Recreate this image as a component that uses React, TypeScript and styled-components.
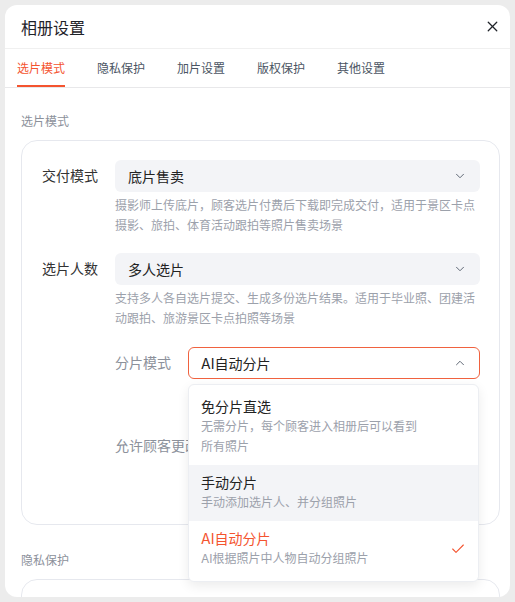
import styled, { createGlobalStyle } from "styled-components";
import { ChevronDown, ChevronUp, X, Check } from "lucide-react";

const ORANGE = "#f4542f";

const GlobalStyle = createGlobalStyle`
  html, body {
    margin: 0;
    padding: 0;
    background: #ececec;
  }
  body {
    font-family: "Inter", "Noto Sans CJK SC", sans-serif;
    color: #333;
  }
  * { box-sizing: border-box; }
`;

const tabs = ["选片模式", "隐私保护", "加片设置", "版权保护", "其他设置"];

const options = [
  {
    title: "免分片直选",
    desc: "无需分片，每个顾客进入相册后可以看到所有照片",
  },
  { title: "手动分片", desc: "手动添加选片人、并分组照片", hover: true },
  { title: "AI自动分片", desc: "AI根据照片中人物自动分组照片", active: true },
];

const App = () => {
  return (
    <Frame>
      <GlobalStyle />
      <Panel>
        <Header>
          <h1>相册设置</h1>
          <X size={17} strokeWidth={1.8} color="#1f2329" />
        </Header>
        <TabBar>
          {tabs.map((t, i) => (
            <Tab key={t} $active={i === 0}>
              {t}
            </Tab>
          ))}
        </TabBar>
        <Content>
          <Section>
            <SectionTitle>选片模式</SectionTitle>
            <Card>
              <Field>
                <Label>交付模式</Label>
                <div>
                  <Select>
                    <span>底片售卖</span>
                    <ChevronDown size={14} strokeWidth={1.5} color="#4b5563" />
                  </Select>
                  <Hint>
                    摄影师上传底片，顾客选片付费后下载即完成交付，适用于景区卡点摄影、旅拍、体育活动跟拍等照片售卖场景
                  </Hint>
                </div>
              </Field>
              <Field>
                <Label>选片人数</Label>
                <div>
                  <Select>
                    <span>多人选片</span>
                    <ChevronDown size={14} strokeWidth={1.5} color="#4b5563" />
                  </Select>
                  <Hint>
                    支持多人各自选片提交、生成多份选片结果。适用于毕业照、团建活动跟拍、旅游景区卡点拍照等场景
                  </Hint>
                </div>
              </Field>
              <SubField>
                <Label $muted>分片模式</Label>
                <SelectWrap>
                  <Select $open>
                    <span>AI自动分片</span>
                    <ChevronUp size={14} strokeWidth={1.5} color="#4b5563" />
                  </Select>
                  <Menu>
                    {options.map((o) => (
                      <Option key={o.title} $hover={o.hover}>
                        <div>
                          <OptionTitle $active={o.active}>{o.title}</OptionTitle>
                          <OptionDesc>{o.desc}</OptionDesc>
                        </div>
                        {o.active && (
                          <Check size={16} strokeWidth={1.6} color={ORANGE} />
                        )}
                      </Option>
                    ))}
                  </Menu>
                </SelectWrap>
              </SubField>
              <SwitchRow>
                <ClippedLabel>允许顾客更改分组</ClippedLabel>
              </SwitchRow>
            </Card>
          </Section>
          <Section>
            <SectionTitle>隐私保护</SectionTitle>
            <Card $short />
          </Section>
        </Content>
      </Panel>
    </Frame>
  );
};

const Frame = styled.div`
  padding: 5px;
  height: 602px;
`;

const Panel = styled.div`
  background: #fff;
  border-radius: 12px;
  height: 592px;
  overflow: hidden;
  display: flex;
  flex-direction: column;
`;

const Header = styled.div`
  height: 44px;
  flex-shrink: 0;
  display: flex;
  align-items: center;
  justify-content: space-between;
  padding: 0 9px 0 16px;
  border-bottom: 1px solid #f0f0f0;

  h1 {
    margin: 0;
    font-size: 16px;
    font-weight: 400;
    color: #1f2329;
  }
`;

const TabBar = styled.div`
  height: 39px;
  flex-shrink: 0;
  display: flex;
  gap: 32px;
  padding: 0 12px;
  border-bottom: 1px solid #e8e8ea;
`;

const Tab = styled.div<{ $active?: boolean }>`
  font-size: 12px;
  line-height: 38px;
  padding-top: 1px;
  color: ${(p) => (p.$active ? ORANGE : "#4b5563")};
  border-bottom: 2px solid ${(p) => (p.$active ? ORANGE : "transparent")};
`;

const Content = styled.div`
  flex: 1;
  padding: 24px 10px 0 16px;
  display: flex;
  flex-direction: column;
  gap: 26px;
`;

const Section = styled.div`
  display: flex;
  flex-direction: column;
`;

const SectionTitle = styled.div`
  font-size: 12px;
  line-height: 20px;
  color: #8c919b;
  margin-bottom: 8px;
`;

const Card = styled.div<{ $short?: boolean }>`
  border: 1px solid #e6e8ee;
  border-radius: 16px;
  padding: 19px 19px 62px 20px;
  min-height: ${(p) => (p.$short ? "80px" : "auto")};
  display: flex;
  flex-direction: column;
  gap: 17px;
`;

const Field = styled.div`
  display: grid;
  grid-template-columns: 73px 1fr;
`;

const SubField = styled(Field)`
  margin-left: 73px;
  margin-top: 1px;
`;

const SwitchRow = styled.div`
  margin-left: 73px;
  margin-top: 34px;
  height: 32px;
  display: flex;
  align-items: center;
`;

const Label = styled.div<{ $muted?: boolean }>`
  font-size: 14px;
  line-height: 32px;
  color: ${(p) => (p.$muted ? "#8c919b" : "#333")};
  white-space: nowrap;
`;

const ClippedLabel = styled(Label).attrs({ $muted: true })`
  width: 73px;
  overflow: hidden;
`;

const Select = styled.div<{ $open?: boolean }>`
  height: 32px;
  border-radius: 6px;
  background: ${(p) => (p.$open ? "#fff" : "#f3f4f7")};
  border: 1px solid ${(p) => (p.$open ? "#f0623f" : "transparent")};
  display: flex;
  align-items: center;
  justify-content: space-between;
  padding: 0 12px;
  font-size: 14px;
  color: #222;
`;

const Hint = styled.div`
  margin-top: 4px;
  font-size: 12px;
  line-height: 20px;
  color: #9ca1ab;
`;

const SelectWrap = styled.div`
  position: relative;
`;

const Menu = styled.div`
  position: absolute;
  top: 37px;
  left: 0;
  right: 1px;
  z-index: 10;
  background: #fff;
  border: 1px solid #eceef2;
  border-radius: 6px;
  box-shadow: 0 4px 12px rgba(0, 0, 0, 0.08);
  padding: 4px 0;
`;

const Option = styled.div<{ $hover?: boolean }>`
  display: flex;
  align-items: center;
  justify-content: space-between;
  padding: 8px 12px;
  background: ${(p) => (p.$hover ? "#f3f4f7" : "#fff")};
`;

const OptionTitle = styled.div<{ $active?: boolean }>`
  font-size: 14px;
  line-height: 20px;
  color: ${(p) => (p.$active ? ORANGE : "#222")};
`;

const OptionDesc = styled.div`
  font-size: 12px;
  line-height: 20px;
  color: #9ca1ab;
  max-width: 222px;
`;

export default App;
